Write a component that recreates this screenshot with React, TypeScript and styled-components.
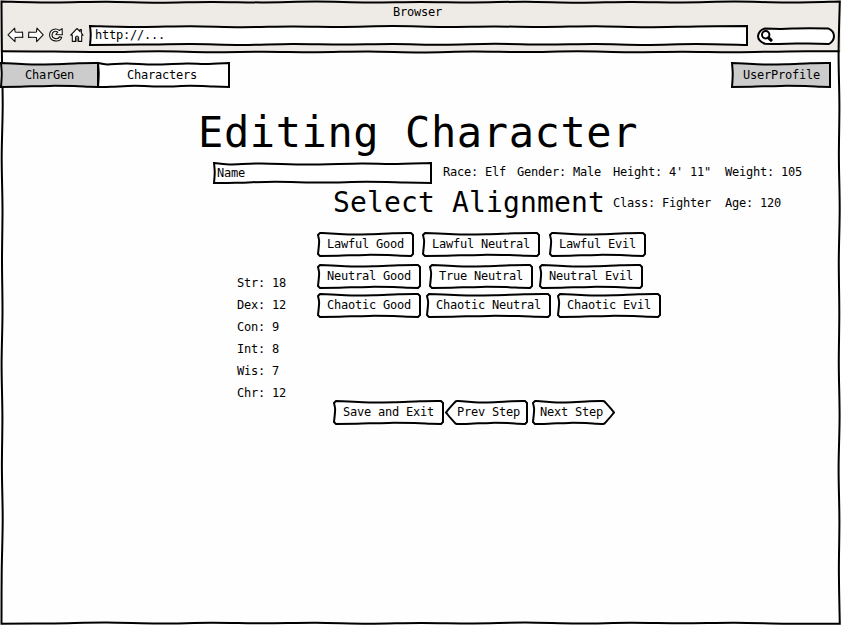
import React from "react";
import styled, { createGlobalStyle } from "styled-components";

const GlobalStyle = createGlobalStyle`
  *, *::before, *::after { box-sizing: border-box; }
  html, body { margin: 0; padding: 0; background: #fefefe; }
  body {
    overflow: hidden;
    color: #000;
    font-family: "DejaVu Sans Mono", monospace;
    font-size: 12px;
    line-height: 14px;
  }
`;

/* ---------- hand-drawn outlines ---------- */

type Pt = [number, number];
// A profile lists [fraction along the edge, distance pushed towards the inside].
type Profile = Pt[];

const curve = (pts: Pt[]) => {
  let d = "";
  for (let i = 0; i < pts.length - 1; i++) {
    const p0 = pts[Math.max(0, i - 1)];
    const p1 = pts[i];
    const p2 = pts[i + 1];
    const p3 = pts[Math.min(pts.length - 1, i + 2)];
    const c1 = [p1[0] + (p2[0] - p0[0]) / 6, p1[1] + (p2[1] - p0[1]) / 6];
    const c2 = [p2[0] - (p3[0] - p1[0]) / 6, p2[1] - (p3[1] - p1[1]) / 6];
    d += `C${[...c1, ...c2, ...p2].map((n) => n.toFixed(2)).join(" ")}`;
  }
  return d;
};

const TOP_SHORT: Profile = [[0, 0], [0.12, 0.6], [0.32, 1.4], [0.55, 1.2], [0.8, 0.3], [1, 0]];
const BOTTOM_SHORT: Profile = [[0, 0], [0.2, 0.3], [0.5, 1.1], [0.75, 0.9], [0.9, 0.3], [1, 0]];
const TOP_MID: Profile = [[0, 0], [0.07, 1.4], [0.22, 0.4], [0.43, 1.6], [0.68, 0.4], [0.82, 1.1], [1, 0]];
const BOTTOM_MID: Profile = [[0, 0], [0.1, 0.2], [0.28, 1.3], [0.5, 0.4], [0.7, 1.3], [0.88, 0.6], [1, 0]];
const LEFT: Profile = [[0, 0], [0.3, 1.1], [0.6, 0.8], [1, 0]];
const LEFT_SOFT: Profile = [[0, 0], [0.4, 0.7], [0.7, 0.5], [1, 0]];
const RIGHT: Profile = [[0, 0], [0.5, 0], [1, 0]];

const longEdge = (length: number, phase: number): Profile => {
  const count = Math.round(length / 52);
  const drift = [0.5, 1, 0.2, 1.2, 0.4, 0.9, 0.1, 1];
  return Array.from({ length: count + 1 }, (_, i) => [
    i / count,
    i === 0 || i === count ? 0 : drift[(i + phase) % drift.length],
  ] as Pt);
};

const along = (a: Pt, b: Pt, profile: Profile): Pt[] => {
  const dx = b[0] - a[0];
  const dy = b[1] - a[1];
  const len = Math.hypot(dx, dy);
  return profile.map(([t, o]) => [a[0] + dx * t - (dy / len) * o, a[1] + dy * t + (dx / len) * o]);
};

const flip = (p: Profile): Profile => p.map(([t, o]) => [1 - t, o] as Pt).reverse();

const join = (sides: Pt[][]) =>
  `M${sides[0][0].join(" ")}` +
  sides
    .map((s, i) => {
      const prev = i ? sides[i - 1][sides[i - 1].length - 1] : s[0];
      const apart = Math.hypot(prev[0] - s[0][0], prev[1] - s[0][1]) > 0.05;
      return (apart ? `L${s[0].map((n) => n.toFixed(2)).join(" ")}` : "") + curve(s);
    })
    .join("") +
  "Z";

type Shape = "box" | "button" | "prev" | "next" | "pill";

const outline = (shape: Shape, w: number, h: number) => {
  const l = 1, t = 1, r = w - 1, b = h - 1;
  const top = w > 400 ? longEdge(w, 0) : w > 125 ? TOP_MID : TOP_SHORT;
  const bottom = w > 400 ? longEdge(w, 3) : w > 125 ? BOTTOM_MID : BOTTOM_SHORT;
  if (shape === "pill") {
    return `M8 ${t + 0.5}Q24 2.4 ${w * 0.45} 1.6T${r - 6} ${t + 0.4}Q${r} 4 ${r} 9Q${r} 14 ${r - 5} ${b}Q${w * 0.7} ${b - 1} ${w * 0.5} ${b - 0.4}T8 ${b - 0.3}Q1 14 1 9Q2 3 8 ${t + 0.5}Z`;
  }
  if (shape === "prev") {
    return join([
      along([12, t], [r - 2, t], TOP_SHORT),
      along([r, t + 2], [r, b - 2], RIGHT),
      along([r - 2, b], [12, b], flip(BOTTOM_SHORT)),
      [[10.5, b - 0.5], [2, h / 2 + 1.2], [2, h / 2 - 1.2], [10.5, t + 0.5]],
    ]);
  }
  if (shape === "next") {
    return join([
      along([l + 2, t], [w - 12, t], TOP_SHORT),
      [[w - 10.5, t + 0.5], [w - 2, h / 2 - 1.2], [w - 2, h / 2 + 1.2], [w - 10.5, b - 0.5]],
      along([w - 12, b], [l + 2, b], flip(BOTTOM_SHORT)),
      along([l, b - 2], [l, t + 2], flip(LEFT)),
    ]);
  }
  const c = shape === "button" ? 2 : 0;
  return join([
    along([l + c, t], [r - c, t], top),
    along([r, t + c], [r, b - c], RIGHT),
    along([r - c, b], [l + c, b], flip(bottom)),
    along([l, b - c], [l, t + c], flip(c ? LEFT : LEFT_SOFT)),
  ]);
};

/* ---------- parts ---------- */

const Holder = styled.div<{ $w: number; $h: number; $pad: number; $ml: number }>`
  position: relative;
  flex: none;
  display: flex;
  align-items: flex-start;
  width: ${(p) => p.$w}px;
  height: ${(p) => p.$h}px;
  padding-top: ${(p) => Math.floor((p.$h - 14) / 2)}px;
  padding-left: ${(p) => p.$pad}px;
  margin-left: ${(p) => p.$ml}px;
  white-space: pre;
`;

const Outline = styled.svg<{ $sharp: boolean }>`
  position: absolute;
  inset: 0;
  width: 100%;
  height: 100%;
  overflow: visible;
  stroke: #000;
  stroke-width: 2;
  stroke-linejoin: ${(p) => (p.$sharp ? "miter" : "round")};
`;

const Label = styled.span`
  position: relative;
  letter-spacing: -0.224px;
  white-space: pre;
`;

interface SketchProps {
  shape?: Shape;
  w: number;
  h?: number;
  pad?: number;
  gap?: number;
  fill?: string;
  children?: React.ReactNode;
}

const Sketch = ({ shape = "box", w, h = 25, pad = 10, gap = 0, fill = "#fff", children }: SketchProps) => (
  <Holder $w={w} $h={h} $pad={pad} $ml={gap}>
    <Outline $sharp={shape === "box"} aria-hidden="true">
      <path d={outline(shape, w, h)} fill={fill} />
    </Outline>
    {children}
  </Holder>
);

const Window = styled.div`
  position: relative;
  width: 841px;
  height: 625px;
  overflow: hidden;
`;

const WindowFrame = styled.svg`
  position: absolute;
  inset: 0;
  width: 841px;
  height: 625px;
  fill: none;
  stroke: #000;
  stroke-width: 2;
  pointer-events: none;
`;

const Chrome = styled.header`
  height: 52px;
  background: #eeebe6;
`;

const TitleBar = styled.div`
  height: 25px;
  padding: 5px 0 0 393px;
`;

const Toolbar = styled.div`
  display: flex;
  align-items: flex-start;
`;

const ToolIcons = styled.div`
  display: flex;
  width: 89px;
  height: 21px;
  padding: 2px 0 0 7px;
  gap: 3px;
`;

const Icon = styled.svg`
  flex: none;
  width: 17.5px;
  height: 17px;
  overflow: visible;
  fill: #fff;
  stroke: #111;
  stroke-width: 1.1;
  stroke-linejoin: round;
  stroke-linecap: round;
`;

const SearchSlot = styled.div`
  padding-top: 2px;
`;

const Magnifier = styled.svg`
  position: relative;
  width: 13px;
  height: 13px;
  fill: none;
  stroke: #000;
  stroke-linecap: round;
`;

const Nav = styled.nav`
  display: flex;
  align-items: flex-start;
  height: 26px;
  margin-top: 10px;
`;

const Title = styled.h1`
  margin: 20px 0 0 198px;
  height: 54px;
  font-size: 42px;
  line-height: 50px;
  font-weight: 400;
  letter-spacing: 0.6px;
  white-space: pre;
`;

const Details = styled.section`
  display: grid;
  grid-template-columns: 219px 74px 96px 112px auto;
  margin-left: 213px;
  height: 22px;
`;

const Detail = styled.div`
  padding: 3px 0 0 11px;
  white-space: pre;
`;

const SubRow = styled.section`
  display: grid;
  grid-template-columns: 280px 112px auto;
  margin-left: 333px;
  height: 48px;
`;

const Subtitle = styled.h2`
  margin: 2px 0 0;
  font-size: 28px;
  line-height: 34px;
  font-weight: 400;
  letter-spacing: 0.143px;
  white-space: pre;
`;

const SubDetail = styled.div`
  padding-top: 12px;
`;

const Workspace = styled.main`
  display: grid;
  grid-template-columns: 80px auto;
  margin-left: 237px;
  height: 168px;
`;

const Stats = styled.ul`
  list-style: none;
  margin: 0;
  padding: 40px 0 0;
`;

const Stat = styled.li`
  height: 22px;
  padding-top: 4px;
`;

const Choices = styled.div`
  display: flex;
  flex-direction: column;
`;

const ChoiceRow = styled.div<{ $space: number }>`
  display: flex;
  margin-top: ${(p) => p.$space}px;
`;

const Actions = styled.footer`
  display: flex;
  margin-left: 333px;
`;

type Choice = { name: string; w: number; gap?: number };

const rows: { space: number; items: Choice[] }[] = [
  { space: 0, items: [{ name: "Lawful Good", w: 97 }, { name: "Lawful Neutral", w: 118, gap: 8 }, { name: "Lawful Evil", w: 97, gap: 9 }] },
  { space: 7, items: [{ name: "Neutral Good", w: 104 }, { name: "True Neutral", w: 104, gap: 8 }, { name: "Neutral Evil", w: 104, gap: 6 }] },
  { space: 4, items: [{ name: "Chaotic Good", w: 104 }, { name: "Chaotic Neutral", w: 125, gap: 5 }, { name: "Chaotic Evil", w: 104, gap: 6 }] },
];

const stats = ["Str: 18", "Dex: 12", "Con: 9", "Int: 8", "Wis: 7", "Chr: 12"];

const framePath = join([
  along([1.5, 1.5], [839.8, 1.5], longEdge(838, 0)),
  along([839.8, 1.5], [839.8, 623.8], longEdge(622, 2)),
  along([839.8, 623.8], [1.5, 623.8], longEdge(838, 5)),
  along([1.5, 623.8], [1.5, 1.5], longEdge(622, 1)),
]);
const rule = along([1.5, 51.2], [839.5, 51.2], longEdge(838, 3));

export default function App() {
  return (
    <>
      <GlobalStyle />
      <Window>
        <Chrome>
          <TitleBar><Label>Browser</Label></TitleBar>
          <Toolbar>
            <ToolIcons>
              <Icon viewBox="0 0 17.5 17"><path d="M1 7.8 7.7 1.2 8.1 5Q12 5.5 15.5 5L15.8 10.4Q12 10 8.1 10.5L8 14.7Z" /></Icon>
              <Icon viewBox="0 0 17.5 17"><path d="M15.2 7.8 8.9 1.2 8.5 5Q4.5 5.5.8 5L.5 10.4Q4.5 10 8.5 10.5L8.7 14.7Z" /></Icon>
              <Icon viewBox="0 0 17.5 17">
                <path d="M11.4 3.5C7.8.3 1.7 2.7 1.6 8C1.6 14.8 11.8 16 13.7 10.4L11.5 9.9C9.7 13 4 12.1 4 8.1C4 4.4 7.6 3.3 9.8 5.2L7.9 7.5 14.3 7.8 14.1 1.6Z" />
              </Icon>
              <Icon viewBox="0 0 17.5 17">
                <path d="M3.3 8V14.4H6.5V10.2Q8 7.7 9.6 10.2V14.4H12.7V8L14 8.1 12.4 6.2V2.6H11V4.7L8 1.5 1.7 8.1Z" />
                <path d="M8 10.8V14.2" />
              </Icon>
            </ToolIcons>
            <Sketch w={659} h={21} pad={6}><Label>http://...</Label></Sketch>
            <SearchSlot>
              <Sketch shape="pill" w={78} h={18} pad={3} gap={9}>
                <Magnifier viewBox="0 0 13 13">
                  <circle cx="5.7" cy="5.7" r="3.7" strokeWidth="2" />
                  <path d="M8.6 8.8 11 11.1" strokeWidth="3.2" />
                </Magnifier>
              </Sketch>
            </SearchSlot>
          </Toolbar>
        </Chrome>
        <WindowFrame aria-hidden="true">
          <path d={framePath} />
          <path d={`M${rule[0].join(" ")}${curve(rule)}`} />
        </WindowFrame>
        <Nav>
          <Sketch w={99} h={26} pad={25} fill="#ccc"><Label>CharGen</Label></Sketch>
          <Sketch w={133} h={26} pad={30} gap={-2}><Label>Characters</Label></Sketch>
          <Sketch w={100} h={26} pad={12} gap={501} fill="#ccc"><Label>UserProfile</Label></Sketch>
        </Nav>
        <Title>Editing Character</Title>
        <Details>
          <Sketch w={219} h={22} pad={4}><Label>Name</Label></Sketch>
          <Detail><Label>Race: Elf</Label></Detail>
          <Detail><Label>Gender: Male</Label></Detail>
          <Detail><Label>Height: 4' 11"</Label></Detail>
          <Detail><Label>Weight: 105</Label></Detail>
        </Details>
        <SubRow>
          <Subtitle>Select Alignment</Subtitle>
          <SubDetail><Label>Class: Fighter</Label></SubDetail>
          <SubDetail><Label>Age: 120</Label></SubDetail>
        </SubRow>
        <Workspace>
          <Stats>
            {stats.map((s) => <Stat key={s}><Label>{s}</Label></Stat>)}
          </Stats>
          <Choices>
            {rows.map((row) => (
              <ChoiceRow key={row.space} $space={row.space}>
                {row.items.map((c) => (
                  <Sketch key={c.name} shape="button" w={c.w} gap={c.gap}><Label>{c.name}</Label></Sketch>
                ))}
              </ChoiceRow>
            ))}
          </Choices>
        </Workspace>
        <Actions>
          <Sketch shape="button" w={111}><Label>Save and Exit</Label></Sketch>
          <Sketch shape="prev" w={83} pad={12} gap={1}><Label>Prev Step</Label></Sketch>
          <Sketch shape="next" w={83} pad={8} gap={4}><Label>Next Step</Label></Sketch>
        </Actions>
      </Window>
    </>
  );
}
